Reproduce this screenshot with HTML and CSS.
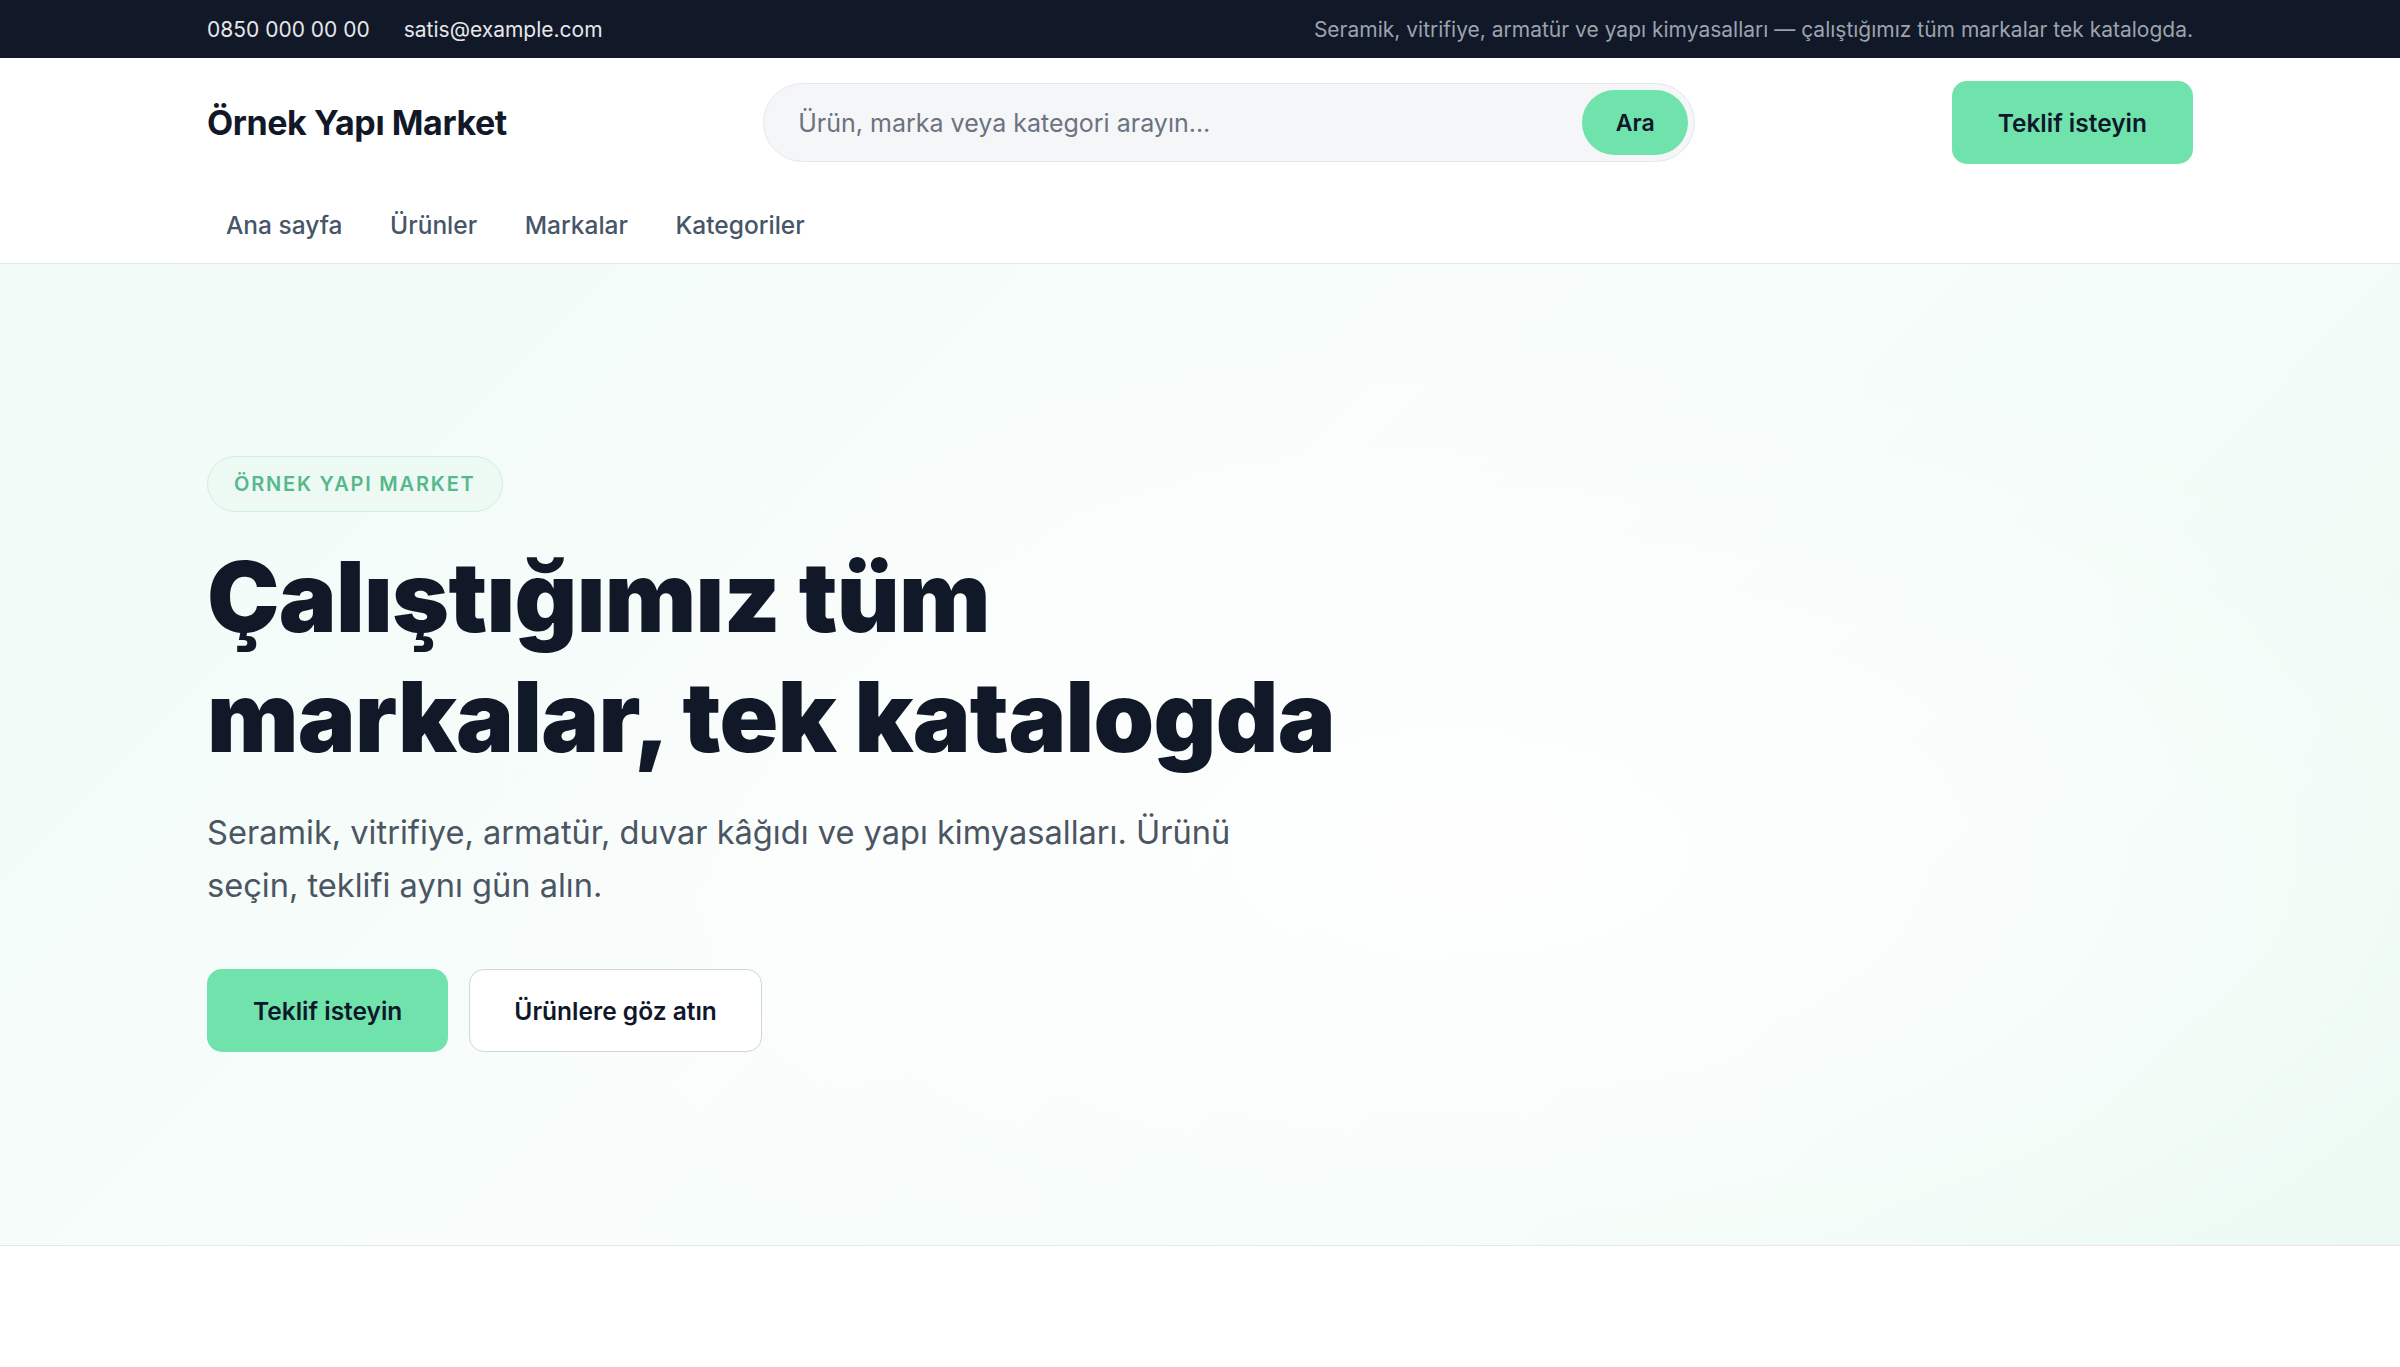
FILE: index.html
```html
<!DOCTYPE html>
<html lang="tr">
<head>
<meta charset="utf-8">
<title>Örnek Yapı Market</title>
<link rel="stylesheet" href="styles.css">
</head>
<body>
<div class="topbar">
  <div class="container topbar-inner">
    <div class="contact">
      <span>0850 000 00 00</span>
      <span>satis@example.com</span>
    </div>
    <div class="tagline">Seramik, vitrifiye, armatür ve yapı kimyasalları — çalıştığımız tüm markalar tek katalogda.</div>
  </div>
</div>
<header class="header">
  <div class="container">
    <div class="header-row">
      <a class="logo" href="#">Örnek Yapı Market</a>
      <form class="search">
        <input class="search-input" type="text" placeholder="Ürün, marka veya kategori arayın...">
        <button class="search-btn" type="button">Ara</button>
      </form>
      <a class="btn btn-primary" href="#">Teklif isteyin</a>
    </div>
    <nav class="nav">
      <a href="#">Ana sayfa</a>
      <a href="#">Ürünler</a>
      <a href="#">Markalar</a>
      <a href="#">Kategoriler</a>
    </nav>
  </div>
</header>
<section class="hero">
  <div class="container">
    <span class="badge">Örnek Yapı Market</span>
    <h1 class="hero-title">Çalıştığımız tüm<br>markalar, tek katalogda</h1>
    <p class="hero-text">Seramik, vitrifiye, armatür, duvar kâğıdı ve yapı kimyasalları. Ürünü seçin, teklifi aynı gün alın.</p>
    <div class="hero-actions">
      <a class="btn btn-primary" href="#">Teklif isteyin</a>
      <a class="btn btn-outline" href="#">Ürünlere göz atın</a>
    </div>
  </div>
</section>
</body>
</html>
```

FILE: styles.css
```css
* { box-sizing: border-box; }
html, body { margin: 0; padding: 0; }
body {
  font-family: Inter, "Noto Sans", "Liberation Sans", sans-serif;
  color: #111827;
  background: #ffffff;
}
a { text-decoration: none; color: inherit; }

.container {
  max-width: 1986px;
  margin: 0 auto;
}

/* Top bar */
.topbar {
  background: #111827;
  height: 58px;
  display: flex;
  align-items: center;
}
.topbar-inner {
  width: 100%;
  display: flex;
  justify-content: space-between;
  align-items: center;
  font-size: 21px;
  line-height: 32px;
  padding-top: 1px;
}
.contact {
  display: flex;
  gap: 34px;
  color: #e5e7eb;
}
.tagline { color: #9ca3af; }

/* Header */
.header {
  background: #ffffff;
  border-bottom: 1px solid #e5e7eb;
  padding-top: 23px;
}
.header-row {
  display: flex;
  justify-content: space-between;
  align-items: center;
  height: 83px;
}
.logo {
  font-size: 34px;
  font-weight: 700;
  letter-spacing: -0.012em;
  color: #111827;
}
.search {
  width: 932px;
  height: 79px;
  display: flex;
  align-items: center;
  background: #f5f6f8;
  border: 1px solid #e5e7eb;
  border-radius: 999px;
  padding: 0 6px 0 32px;
  margin: 0;
}
.search-input {
  flex: 1;
  border: 0;
  background: transparent;
  outline: none;
  font-family: inherit;
  font-size: 25px;
  color: #111827;
}
.search-input::placeholder { color: #6b7280; }
.search-btn {
  width: 106px;
  height: 65px;
  border: 0;
  border-radius: 999px;
  background: #70e2ac;
  color: #0f172a;
  font-family: inherit;
  font-size: 23px;
  font-weight: 600;
}

.btn {
  display: inline-flex;
  align-items: center;
  justify-content: center;
  height: 83px;
  padding: 0 46px;
  border-radius: 15px;
  font-size: 24.5px;
  font-weight: 600;
  color: #0f172a;
  white-space: nowrap;
}
.btn-primary {
  background: #70e2ac;
}
.btn-outline {
  background: #ffffff;
  border: 1.5px solid #d1d5db;
  padding: 0 44px;
}

.nav {
  display: flex;
  gap: 9.5px;
  margin-top: 34px;
  padding-bottom: 10px;
}
.nav a {
  padding: 9px 19px;
  font-size: 24.5px;
  line-height: 37px;
  font-weight: 500;
  color: #475569;
}

/* Hero */
.hero {
  border-bottom: 1px solid #e5e7eb;
  padding: 192px 0 193px;
  background:
    radial-gradient(ellipse 45% 55% at 62% 60%, rgba(255,255,255,0.95) 0%, rgba(255,255,255,0) 100%),
    linear-gradient(135deg, #f1fbf7 0%, #f8fdfb 45%, #f3fcf8 70%, #ecfaf3 100%);
}
.badge {
  display: inline-flex;
  align-items: center;
  height: 56px;
  padding: 0 26px;
  border: 1.5px solid #cdf1df;
  background: #edfaf4;
  border-radius: 999px;
  color: #56b88d;
  font-size: 20px;
  font-weight: 600;
  letter-spacing: 0.09em;
  text-transform: uppercase;
}
.hero-title {
  margin: 25px 0 0;
  font-size: 97px;
  line-height: 120px;
  font-weight: 900;
  letter-spacing: -0.007em;
  color: #111827;
}
.hero-text {
  margin: 29px 0 0;
  max-width: 1090px;
  font-size: 32.6px;
  line-height: 53px;
  color: #4b5563;
}
.hero-actions {
  display: flex;
  gap: 21px;
  margin-top: 57px;
}
```
